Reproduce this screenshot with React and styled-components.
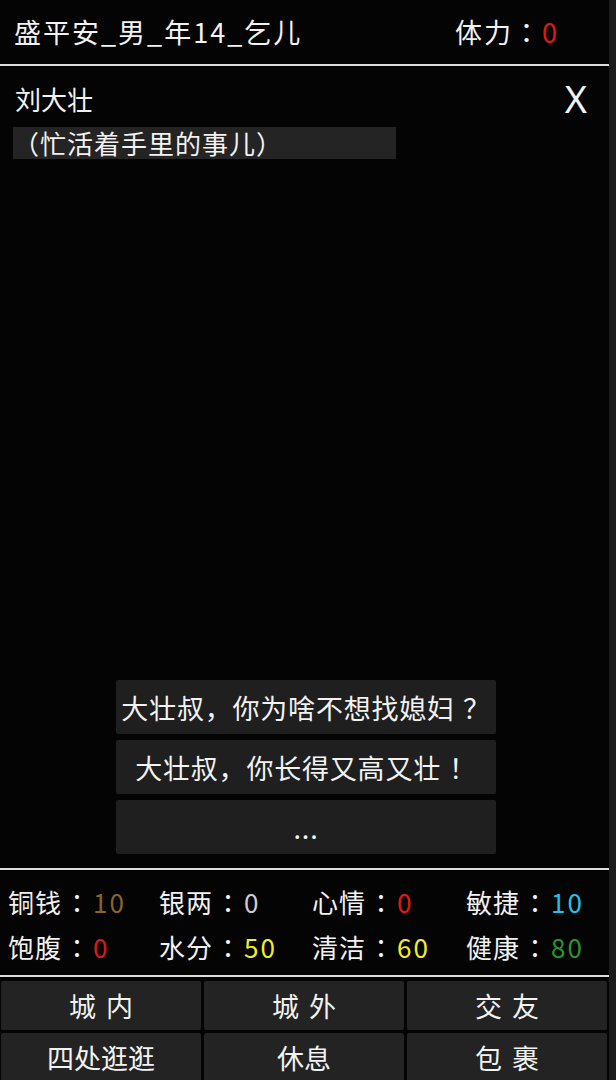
import React from "react";
import styled, { createGlobalStyle } from "styled-components";

const Global = createGlobalStyle`
  html, body { margin: 0; padding: 0; background: #1b1b1b; }
  body {
    font-family: "Noto Sans CJK SC", "Noto Sans", sans-serif;
    color: #f2f2f2;
    text-spacing-trim: space-all;
  }
  * { box-sizing: border-box; }
`;

const Screen = styled.div`
  width: 609px;
  height: 1080px;
  background: #040404;
  display: flex;
  flex-direction: column;
  overflow: hidden;
`;

const Header = styled.div`
  height: 66px;
  flex: none;
  display: flex;
  align-items: center;
  justify-content: space-between;
  padding: 0 50px 2px 14px;
  border-bottom: 2px solid #dcdcdc;
  font-size: 27px;
  letter-spacing: 2px;
  white-space: nowrap;
`;

const Val = styled.span`
  color: ${(p) => p.$c || "#f2f2f2"};
  letter-spacing: 2px;
`;

const Colon = styled.span`
  font-family: "Noto Sans CJK JP", sans-serif;
  padding: 0 ${(p) => p.$pad || 0}px;
`;

const Mark = styled.span`
  margin-left: 8px;
`;

const Dialog = styled.div`
  flex: 1;
  display: flex;
  flex-direction: column;
  padding: 12px 0 14px 13px;
`;

const NameRow = styled.div`
  display: flex;
  justify-content: space-between;
  align-items: center;
  height: 40px;
  padding-left: 2px;
  padding-right: 22px;
  font-size: 26px;
`;

const Close = styled.span`
  font-family: "Noto Sans", sans-serif;
  font-size: 38px;
  line-height: 1;
  font-weight: 400;
`;

const Status = styled.div`
  margin-top: 9px;
  width: 383px;
  height: 32px;
  background: #242424;
  font-size: 26px;
  letter-spacing: 1px;
  line-height: 32px;
  white-space: nowrap;
`;

const Options = styled.div`
  margin-top: auto;
  align-self: flex-start;
  margin-left: 103px;
  display: flex;
  flex-direction: column;
  gap: 6px;
  width: 380px;
`;

const Option = styled.div`
  height: 54px;
  background: #1f1f1f;
  border-radius: 2px;
  display: flex;
  align-items: center;
  justify-content: center;
  font-size: 27px;
  letter-spacing: 0.8px;
  white-space: nowrap;
`;

const Stats = styled.div`
  flex: none;
  height: 109px;
  border-top: 2px solid #dcdcdc;
  border-bottom: 2px solid #dcdcdc;
  display: grid;
  grid-template-columns: 151px 153px 154px 1fr;
  grid-auto-rows: 45px;
  padding: 9px 0 0 8px;
  font-size: 26px;
  letter-spacing: 1px;
`;

const Stat = styled.div`
  display: flex;
  align-items: center;
  white-space: nowrap;
`;

const Nav = styled.div`
  flex: none;
  display: grid;
  grid-template-columns: repeat(3, 1fr);
  grid-auto-rows: 49px;
  gap: 3px;
  padding: 4px 2px 0 1px;
  height: 103px;
`;

const NavBtn = styled.div`
  background: #232323;
  border-radius: 2px;
  display: flex;
  align-items: center;
  justify-content: center;
  font-size: 27px;
  white-space: nowrap;
  letter-spacing: ${(p) => (p.$spaced ? "10px" : "0")};
  text-indent: ${(p) => (p.$spaced ? "10px" : "0")};
`;

const stats = [
  ["铜钱", "10", "#8a6424"],
  ["银两", "0", "#cfcfcf"],
  ["心情", "0", "#e01818"],
  ["敏捷", "10", "#20c4e6"],
  ["饱腹", "0", "#e01818"],
  ["水分", "50", "#f2ee22"],
  ["清洁", "60", "#f2ee22"],
  ["健康", "80", "#2a9628"],
];

const navs = [
  ["城内", true],
  ["城外", true],
  ["交友", true],
  ["四处逛逛", false],
  ["休息", false],
  ["包裹", true],
];

export default function App() {
  return (
    <>
      <Global />
      <Screen>
        <Header>
          <span>盛平安_男_年14_乞儿</span>
          <span>
            体力<Colon>：</Colon>
            <Val $c="#e01818">0</Val>
          </span>
        </Header>
        <Dialog>
          <NameRow>
            <span>刘大壮</span>
            <Close>X</Close>
          </NameRow>
          <Status>（忙活着手里的事儿）</Status>
          <Options>
            <Option>
              大壮叔，你为啥不想找媳妇<Mark>？</Mark>
            </Option>
            <Option>
              大壮叔，你长得又高又壮<Mark>！</Mark>
            </Option>
            <Option>...</Option>
          </Options>
        </Dialog>
        <Stats>
          {stats.map(([k, v, c]) => (
            <Stat key={k}>
              {k}
              <Colon $pad={2}>：</Colon>
              <Val $c={c}>{v}</Val>
            </Stat>
          ))}
        </Stats>
        <Nav>
          {navs.map(([t, s]) => (
            <NavBtn key={t} $spaced={s}>
              {t}
            </NavBtn>
          ))}
        </Nav>
      </Screen>
    </>
  );
}
